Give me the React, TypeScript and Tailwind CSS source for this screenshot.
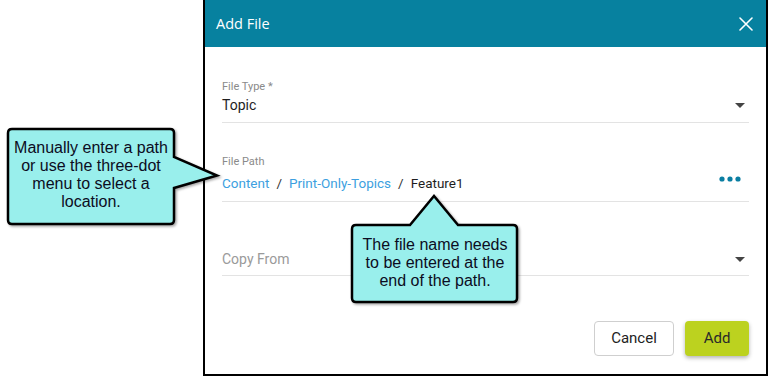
function Caret() {
  return (
    <svg width="10" height="5" viewBox="0 0 10 5" className="mr-[4px]">
      <path d="M0 0 L10 0 L5 5 Z" fill="#444" />
    </svg>
  );
}

function Dots() {
  return (
    <svg width="24" height="6" viewBox="0 0 24 6" className="mb-[8px] mr-[6px]">
      <circle cx="3" cy="3" r="2.6" fill="#0a7ea2" />
      <circle cx="11" cy="3" r="2.6" fill="#0a7ea2" />
      <circle cx="19" cy="3" r="2.6" fill="#0a7ea2" />
    </svg>
  );
}

function CloseIcon() {
  return (
    <svg width="14" height="14" viewBox="0 0 14 14">
      <path d="M1 1 L13 13 M13 1 L1 13" stroke="#fff" strokeWidth="1.6" strokeLinecap="round" />
    </svg>
  );
}

function Callouts() {
  return (
    <>
      <svg className="absolute left-0 top-0 pointer-events-none" width="768" height="376" viewBox="0 0 768 376">
        <defs>
          <filter id="sh" x="-10%" y="-10%" width="130%" height="130%">
            <feDropShadow dx="1.5" dy="1.5" stdDeviation="0.8" floodColor="#000" floodOpacity="0.35" />
          </filter>
        </defs>
        <path
          d="M12 129 H170 Q174 129 174 133 V157 L217 175.5 L174 188 V220 Q174 224 170 224 H12 Q8 224 8 220 V133 Q8 129 12 129 Z"
          fill="#99efec"
          stroke="#000"
          strokeWidth="2.5"
          filter="url(#sh)"
        />
        <path
          d="M356 225 H410 L434 196 L458 225 H513 Q517 225 517 229 V298 Q517 302 513 302 H356 Q352 302 352 298 V229 Q352 225 356 225 Z"
          fill="#99efec"
          stroke="#000"
          strokeWidth="2.5"
          filter="url(#sh)"
        />
      </svg>
      <div
        className="absolute left-[8px] top-[139px] w-[166px] text-center text-[16px] leading-[18px] text-[#0c0c22]"
        style={{ fontFamily: '"Liberation Sans", Arial, sans-serif' }}
      >
        Manually enter a path
        <br />
        or use the three-dot
        <br />
        menu to select a
        <br />
        location.
      </div>
      <div
        className="absolute left-[352px] top-[236px] w-[166px] text-center text-[16px] leading-[18px] text-[#0c0c22]"
        style={{ fontFamily: '"Liberation Sans", Arial, sans-serif' }}
      >
        The file name needs
        <br />
        to be entered at the
        <br />
        end of the path.
      </div>
    </>
  );
}

export default function App() {
  return (
    <div className="relative w-[768px] h-[376px] bg-white overflow-hidden font-['Roboto',sans-serif]">
      <div className="flex justify-end w-full h-full">
        <div className="w-[565px] h-[376px] border-l-2 border-r-2 border-b-2 border-black flex flex-col bg-white">
          <div className="h-[47px] bg-[#07819f] flex items-center justify-between pl-[11px] pr-[13px]">
            <span className="text-white text-[14.5px] font-['Open_Sans',sans-serif]">Add File</span>
            <CloseIcon />
          </div>

          <div className="px-[17px] pt-[33px]">
            <div className="border-b border-[#e3e3e3] pb-[7px]">
              <div className="text-[11px] leading-[14px] text-[#8a8a8a]">File Type *</div>
              <div className="mt-[1px] h-[20px] flex items-center justify-between">
                <span className="text-[14px] text-[#1e1e1e]">Topic</span>
                <Caret />
              </div>
            </div>

            <div className="border-b border-[#e3e3e3] pb-[8px] mt-[32px]">
              <div className="text-[11px] leading-[14px] text-[#8a8a8a]">File Path</div>
              <div className="mt-[4px] h-[20px] flex items-center justify-between">
                <div className="flex items-center text-[13.5px]">
                  <span className="text-[#3d9fe0]">Content</span>
                  <span className="mx-[7px] text-[#333]">/</span>
                  <span className="text-[#3d9fe0]">Print-Only-Topics</span>
                  <span className="mx-[7px] text-[#333]">/</span>
                  <span className="text-[#1e1e1e]">Feature1</span>
                </div>
                <Dots />
              </div>
            </div>

            <div className="border-b border-[#e3e3e3] pb-[6px] mt-[47px]">
              <div className="h-[20px] flex items-center justify-between">
                <span className="text-[14px] text-[#9a9a9a]">Copy From</span>
                <Caret />
              </div>
            </div>

            <div className="flex justify-end gap-[11px] mt-[45px]">
              <button className="w-[80px] h-[35px] rounded-[4px] border border-[#cfcfcf] bg-white text-[15px] text-[#222]">
                Cancel
              </button>
              <button className="w-[64px] h-[35px] rounded-[4px] bg-[#bcd21f] text-[15px] text-[#2a2a2a] shadow-[0_2px_4px_rgba(0,0,0,0.3)]">
                Add
              </button>
            </div>
          </div>
        </div>
      </div>
      <Callouts />
    </div>
  );
}
